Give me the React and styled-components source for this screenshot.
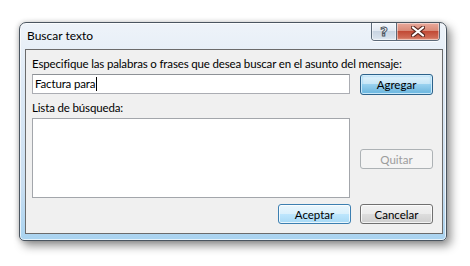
import React from "react"
import styled, { createGlobalStyle } from "styled-components"

const GlobalStyle = createGlobalStyle`
  html, body {
    margin: 0;
    padding: 0;
    background: #ffffff;
  }
  body {
    font-family: Lato, "Noto Sans", sans-serif;
    font-size: 11.5px;
    letter-spacing: -0.15px;
    color: #000;
  }
`

const Stage = styled.div`
  width: 470px;
  height: 266px;
  padding: 22px 0 0 19px;
  box-sizing: border-box;
`

const Window = styled.div`
  width: 428px;
  height: 219px;
  box-sizing: border-box;
  border: 1px solid #4a5560;
  border-radius: 7px 7px 5px 5px;
  background: linear-gradient(180deg, #eef3f9 0%, #dde9f5 30%, #c9def1 75%, #a9d3f0 100%);
  box-shadow: inset 0 0 0 1px rgba(255, 255, 255, 0.7), 4px 5px 10px rgba(0, 0, 0, 0.42),
    -1px 0 5px rgba(0, 0, 0, 0.18);
  display: flex;
  flex-direction: column;
`

const TitleBar = styled.div`
  height: 26px;
  display: flex;
  align-items: flex-start;
  justify-content: space-between;
  padding: 0 6px 0 7px;
`

const Title = styled.span`
  line-height: 26px;
  font-size: 12px;
  letter-spacing: 0;
  color: #000;
`

const CaptionButtons = styled.div`
  display: flex;
  height: 17px;
  border: 1px solid #5b6978;
  border-top: none;
  border-radius: 0 0 4px 4px;
  overflow: hidden;
  box-shadow: 0 1px 0 rgba(255, 255, 255, 0.8);
`

const CaptionButton = styled.div`
  width: ${(p) => p.$w}px;
  display: flex;
  align-items: center;
  justify-content: center;
  box-shadow: inset 0 0 0 1px rgba(255, 255, 255, 0.45);
  background: ${(p) =>
    p.$close
      ? "linear-gradient(180deg, #e9a99b 0%, #d98a78 45%, #c24a36 50%, #cf6a55 85%, #e19a85 100%)"
      : "linear-gradient(180deg, #f4f7fb 0%, #e2e9f2 45%, #c8d4e2 50%, #d6e0eb 85%, #e4ebf3 100%)"};
  & + & {
    border-left: 1px solid #5b6978;
  }
`

const HelpGlyph = styled.span`
  font-family: "DejaVu Sans", sans-serif;
  font-weight: bold;
  font-size: 13px;
  line-height: 13px;
  color: #ffffff;
  -webkit-text-stroke: 1px #4b5561;
`

const Body = styled.div`
  flex: 1;
  padding: 0 3px 6px 5px;
  display: flex;
`

const Client = styled.div`
  flex: 1;
  border: 1px solid #6b6b6b;
  background: #f0f0f0;
  padding: 6px 9px 9px 6px;
  display: grid;
  grid-template-columns: 318px 73px;
  grid-template-rows: auto auto auto auto auto;
  grid-template-areas:
    "intro intro"
    "field add"
    "listlabel ."
    "list remove"
    "footer footer";
  column-gap: 10px;
  align-items: start;
  box-sizing: border-box;
`

const Label = styled.div`
  grid-area: ${(p) => p.$area};
  line-height: 16px;
  white-space: nowrap;
  margin-top: ${(p) => p.$mt || 0}px;
`

const TextBox = styled.div`
  grid-area: field;
  margin-top: 2px;
  height: 20px;
  box-sizing: border-box;
  border: 1px solid #abadb3;
  border-top-color: #8d9196;
  background: #fff;
  padding: 0 2px;
  display: flex;
  align-items: center;
  line-height: 16px;
`

const Caret = styled.span`
  display: inline-block;
  width: 1px;
  height: 14px;
  background: #000;
  margin-left: 1px;
`

const ListBox = styled.div`
  grid-area: list;
  margin-top: 2px;
  height: 80px;
  box-sizing: border-box;
  border: 1px solid #a3a6ab;
  background: #fff;
`

const Button = styled.button`
  grid-area: ${(p) => p.$area || "auto"};
  font: inherit;
  width: 73px;
  height: ${(p) => p.$h || 21}px;
  padding: 0;
  margin-top: ${(p) => p.$mt || 0}px;
  border-radius: 3px;
  border: 1px solid #707070;
  color: #000;
  background: linear-gradient(180deg, #f2f2f2 0%, #ebebeb 50%, #dddddd 50%, #cfcfcf 100%);
  box-shadow: inset 0 0 0 1px rgba(255, 255, 255, 0.75);
  &.default {
    border-color: #3c7fb1;
    background: linear-gradient(180deg, #eaf6fd 0%, #d9f0fc 50%, #bee6fd 50%, #a7d9f5 100%);
  }
  &.hot {
    border-color: #2c628b;
    background: linear-gradient(180deg, #e5f4fc 0%, #c4e5f6 50%, #98d1ef 50%, #68b3db 100%);
    box-shadow: inset 0 0 0 1px rgba(255, 255, 255, 0.6), inset 0 0 2px 1px #76c7f2;
  }
  &:disabled {
    border-color: #adb2b5;
    background: #f4f4f4;
    color: #9c9c9c;
    box-shadow: none;
  }
`

const Footer = styled.div`
  grid-area: footer;
  display: flex;
  justify-content: flex-end;
  gap: 9px;
  margin-top: 6px;
`

const CloseIcon = () => (
  <svg width="14" height="11" viewBox="0 0 14 11">
    <path
      d="M2 1.5 L12 9.5 M12 1.5 L2 9.5"
      stroke="#5a2a22"
      strokeWidth="4.2"
      strokeLinecap="round"
    />
    <path
      d="M2 1.5 L12 9.5 M12 1.5 L2 9.5"
      stroke="#ffffff"
      strokeWidth="2.2"
      strokeLinecap="round"
    />
  </svg>
)

export default function App() {
  return (
    <Stage>
      <GlobalStyle />
      <Window>
        <TitleBar>
          <Title>Buscar texto</Title>
          <CaptionButtons>
            <CaptionButton $w={24}>
              <HelpGlyph>?</HelpGlyph>
            </CaptionButton>
            <CaptionButton $w={42} $close>
              <CloseIcon />
            </CaptionButton>
          </CaptionButtons>
        </TitleBar>
        <Body>
          <Client>
            <Label $area="intro">
              Especifique las palabras o frases que desea buscar en el asunto del mensaje:
            </Label>
            <TextBox>
              Factura para
              <Caret />
            </TextBox>
            <Button $area="add" $mt={2} className="hot">
              Agregar
            </Button>
            <Label $area="listlabel" $mt={5}>
              Lista de búsqueda:
            </Label>
            <ListBox />
            <Button $area="remove" $mt={33} $h={20} disabled>
              Quitar
            </Button>
            <Footer>
              <Button className="default" $h={20}>
                Aceptar
              </Button>
              <Button $h={20}>Cancelar</Button>
            </Footer>
          </Client>
        </Body>
      </Window>
    </Stage>
  )
}
